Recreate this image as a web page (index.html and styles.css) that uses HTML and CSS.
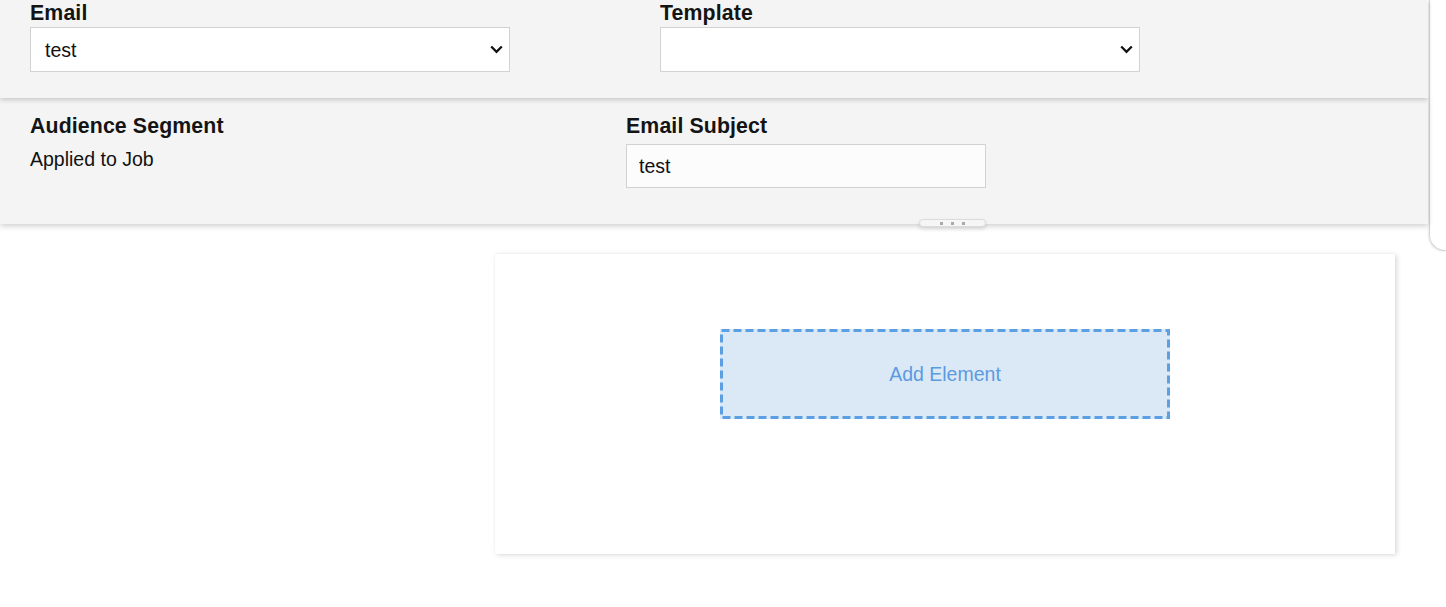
FILE: index.html
```html
<!DOCTYPE html>
<html lang="en">
<head>
<meta charset="utf-8">
<title>Email Campaign</title>
<link rel="stylesheet" href="styles.css">
</head>
<body>
<div class="app">
  <div class="main">
    <section class="panel panel-top">
      <div class="grid grid-top">
        <div class="field">
          <div class="label">Email</div>
          <div class="select">
            <span class="select-value">test</span>
            <svg class="chevron" width="13" height="9" viewBox="0 0 13 9"><path d="M1.2 1.5 L6.5 6.8 L11.8 1.5" fill="none" stroke="#111" stroke-width="2.3"/></svg>
          </div>
        </div>
        <div class="field">
          <div class="label">Template</div>
          <div class="select">
            <span class="select-value"></span>
            <svg class="chevron" width="13" height="9" viewBox="0 0 13 9"><path d="M1.2 1.5 L6.5 6.8 L11.8 1.5" fill="none" stroke="#111" stroke-width="2.3"/></svg>
          </div>
        </div>
      </div>
    </section>
    <section class="panel panel-bottom">
      <div class="grid grid-bottom">
        <div class="field">
          <div class="label">Audience Segment</div>
          <div class="value">Applied to Job</div>
        </div>
        <div class="field">
          <div class="label">Email Subject</div>
          <div class="input">test</div>
        </div>
      </div>
      <div class="handle"><span class="dot"></span><span class="dot"></span><span class="dot"></span></div>
    </section>
    <div class="workspace">
      <div class="canvas">
        <div class="add-element">
          <svg class="dash" width="450" height="90" viewBox="0 0 450 90"><rect x="1.5" y="1.5" width="447" height="87" fill="none" stroke="#5c9fe2" stroke-width="3" stroke-dasharray="8 4"/></svg>
          <span class="add-text">Add Element</span>
        </div>
      </div>
    </div>
  </div>
  <aside class="side"></aside>
</div>
</body>
</html>
```

FILE: styles.css
```css
html, body {
  margin: 0;
  padding: 0;
  background: #ffffff;
}

body {
  font-family: "Liberation Sans", Arial, Helvetica, sans-serif;
  color: #111111;
  font-size: 19.5px;
}

.app {
  display: flex;
  align-items: flex-start;
  width: 1446px;
}

.main {
  width: 1428px;
  flex: none;
}

.side {
  flex: 1;
  height: 250px;
  margin-left: 1px;
  background: #ffffff;
  border-left: 1px solid #d6d6d6;
  border-bottom: 1px solid #d6d6d6;
  border-bottom-left-radius: 16px;
  box-shadow: -1px 1px 2px rgba(0, 0, 0, 0.08);
}

.panel {
  background: #f4f4f4;
  position: relative;
}

.panel-top {
  z-index: 2;
  height: 98px;
  box-sizing: border-box;
  padding: 1px 0 0 30px;
  box-shadow: 0 2px 5px rgba(0, 0, 0, 0.18);
}

.panel-bottom {
  z-index: 1;
  height: 126px;
  box-sizing: border-box;
  padding: 16px 0 0 30px;
  box-shadow: 0 2px 6px rgba(0, 0, 0, 0.2);
}

.grid {
  display: grid;
}

.grid-top {
  grid-template-columns: 480px 480px;
  column-gap: 150px;
}

.grid-bottom {
  grid-template-columns: 596px 360px;
}

.field {
  display: flex;
  flex-direction: column;
}

.label {
  font-size: 21.3px;
  line-height: 24px;
  font-weight: bold;
  letter-spacing: 0.12px;
  color: #141414;
}

.select {
  margin-top: 2px;
  height: 45px;
  box-sizing: border-box;
  background: #ffffff;
  border: 1px solid #d2d2d2;
  padding: 0 6px 0 14px;
  display: flex;
  align-items: center;
  justify-content: space-between;
  line-height: 22px;
}

.select-value {
  color: #111111;
}

.chevron {
  display: block;
  flex: none;
}

.value {
  margin-top: 10px;
  line-height: 22px;
  color: #111111;
}

.input {
  margin-top: 6px;
  height: 44px;
  box-sizing: border-box;
  background: #fcfcfc;
  border: 1px solid #d2d2d2;
  padding: 0 12px;
  display: flex;
  align-items: center;
  line-height: 22px;
}

.handle {
  position: absolute;
  left: 919px;
  top: 121px;
  width: 67px;
  height: 8px;
  box-sizing: border-box;
  background: #f6f6f6;
  border: 1px solid #dcdcdc;
  border-radius: 4px;
  box-shadow: 0 2px 4px rgba(0, 0, 0, 0.12);
  display: flex;
  justify-content: center;
  align-items: center;
  gap: 8px;
}

.dot {
  width: 3px;
  height: 3px;
  background: #a9a9a9;
}

.workspace {
  padding: 30px 0 40px 495px;
}

.canvas {
  width: 900px;
  height: 300px;
  box-sizing: border-box;
  background: #ffffff;
  padding-top: 75px;
  display: flex;
  justify-content: center;
  align-items: flex-start;
  box-shadow: 2px 1px 5px rgba(0, 0, 0, 0.14), 0 0 2px rgba(0, 0, 0, 0.06);
}

.add-element {
  position: relative;
  width: 450px;
  height: 90px;
  box-sizing: border-box;
  background: #dbe8f6;
  color: #5b9be0;
  font-size: 19.5px;
  display: flex;
  align-items: center;
  justify-content: center;
}

.dash {
  position: absolute;
  left: 0;
  top: 0;
  display: block;
}

.add-text {
  position: relative;
}
```
